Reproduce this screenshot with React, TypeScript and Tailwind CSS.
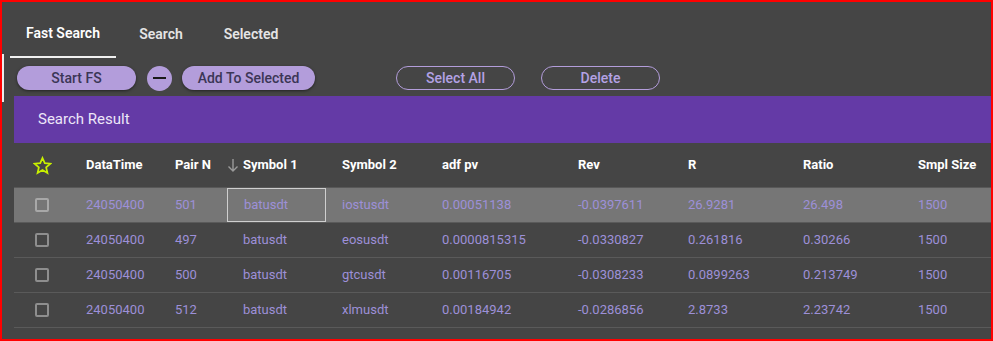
import React from "react";

const cols = "grid grid-cols-[56px_89px_68px_99px_100px_136px_110px_115px_115px_89px]";

const rows = [
  ["24050400", "501", "batusdt", "iostusdt", "0.00051138", "-0.0397611", "26.9281", "26.498", "1500"],
  ["24050400", "497", "batusdt", "eosusdt", "0.0000815315", "-0.0330827", "0.261816", "0.30266", "1500"],
  ["24050400", "500", "batusdt", "gtcusdt", "0.00116705", "-0.0308233", "0.0899263", "0.213749", "1500"],
  ["24050400", "512", "batusdt", "xlmusdt", "0.00184942", "-0.0286856", "2.8733", "2.23742", "1500"],
];

function Star() {
  return (
    <svg width="19" height="19" viewBox="0 0 24 24" fill="none" stroke="#c8f000" strokeWidth="2.2" strokeLinejoin="miter">
      <path d="M12 2.5l2.9 6.6 7.1.6-5.4 4.7 1.6 7-6.2-3.7-6.2 3.7 1.6-7L2 9.7l7.1-.6z" />
    </svg>
  );
}

function Check({ light }: { light?: boolean }) {
  return (
    <div
      className={`w-[14px] h-[14px] rounded-[2px] border-2 ${light ? "border-[#a8a8a8]" : "border-[#8e8e8e]"}`}
    />
  );
}

export default function App() {
  return (
    <div
      className="relative w-[993px] h-[341px] bg-[#454545] border-2 border-[#ff0000] overflow-hidden"
      style={{ fontFamily: "Roboto, 'Liberation Sans', sans-serif" }}
    >
      <div className="absolute left-0 top-[52px] w-[2px] h-[48px] bg-[#ececec]" />
      {/* Tabs */}
      <div className="flex ml-[8px] mt-[8px] h-[48px]">
        <div className="min-w-[90px] px-4 flex items-center justify-center text-[14px] font-semibold text-white border-b-2 border-[#f0f0f0]">
          Fast Search
        </div>
        <div className="min-w-[90px] px-4 flex items-center justify-center text-[14px] font-semibold text-[#e4e4e4]">
          Search
        </div>
        <div className="min-w-[90px] px-4 flex items-center justify-center text-[14px] font-semibold text-[#e4e4e4]">
          Selected
        </div>
      </div>
      {/* Buttons */}
      <div className="flex items-center mt-[8px] ml-[15px] h-[24px]">
        <button className="w-[119px] h-[24px] rounded-full bg-[#b39ddb] text-[14px] font-medium text-[#3b3656] shadow-[0_1px_3px_rgba(0,0,0,0.5)]">
          Start FS
        </button>
        <button className="ml-[11px] w-[25px] h-[25px] rounded-full bg-[#b39ddb] flex items-center justify-center">
          <span className="block w-[13px] h-[2px] bg-[#1a1a1a]" />
        </button>
        <button className="ml-[10px] w-[133px] h-[24px] rounded-full bg-[#b39ddb] text-[14px] font-medium text-[#3b3656] shadow-[0_1px_3px_rgba(0,0,0,0.5)]">
          Add To Selected
        </button>
        <button className="ml-[81px] w-[119px] h-[24px] rounded-full border border-[#b39ddb] text-[14px] font-medium text-[#b4a2e4]">
          Select All
        </button>
        <button className="ml-[26px] w-[119px] h-[24px] rounded-full border border-[#b39ddb] text-[14px] font-medium text-[#b4a2e4]">
          Delete
        </button>
      </div>
      {/* Panel */}
      <div className="ml-[12px] mt-[6px]">
        <div className="h-[47px] bg-[#643aa6] flex items-center pl-[24px] text-[15px] text-[#ede6f8]">
          Search Result
        </div>
        <div className={`${cols} h-[45px] items-center border-b border-[#585858] text-[13px] font-bold text-white`}>
          <div className="flex justify-center"><Star /></div>
          <div className="pl-4">DataTime</div>
          <div className="pl-4">Pair N</div>
          <div className="flex items-center gap-[4px]">
            <svg width="12" height="14" viewBox="0 0 12 14" fill="none" stroke="#9a9a9a" strokeWidth="1.4">
              <path d="M6 1v12M1.5 8.5L6 13l4.5-4.5" />
            </svg>
            <span>Symbol 1</span>
          </div>
          <div className="pl-4">Symbol 2</div>
          <div className="pl-4">adf pv</div>
          <div className="pl-4">Rev</div>
          <div className="pl-4">R</div>
          <div className="pl-4">Ratio</div>
          <div className="pl-4">Smpl Size</div>
        </div>
        {rows.map((r, i) => (
          <div
            key={i}
            className={`${cols} h-[35px] items-center border-b border-[#5a5a5a] text-[13px] text-[#9d90d8] ${i === 0 ? "bg-[#767676]" : ""}`}
          >
            <div className="flex justify-center"><Check light={i === 0} /></div>
            {r.map((c, j) => (
              <div
                key={j}
                className={`pl-4 h-full flex items-center ${i === 0 && j === 2 ? "border border-[#cfcfcf]" : ""}`}
              >
                {c}
              </div>
            ))}
          </div>
        ))}
      </div>
    </div>
  );
}
